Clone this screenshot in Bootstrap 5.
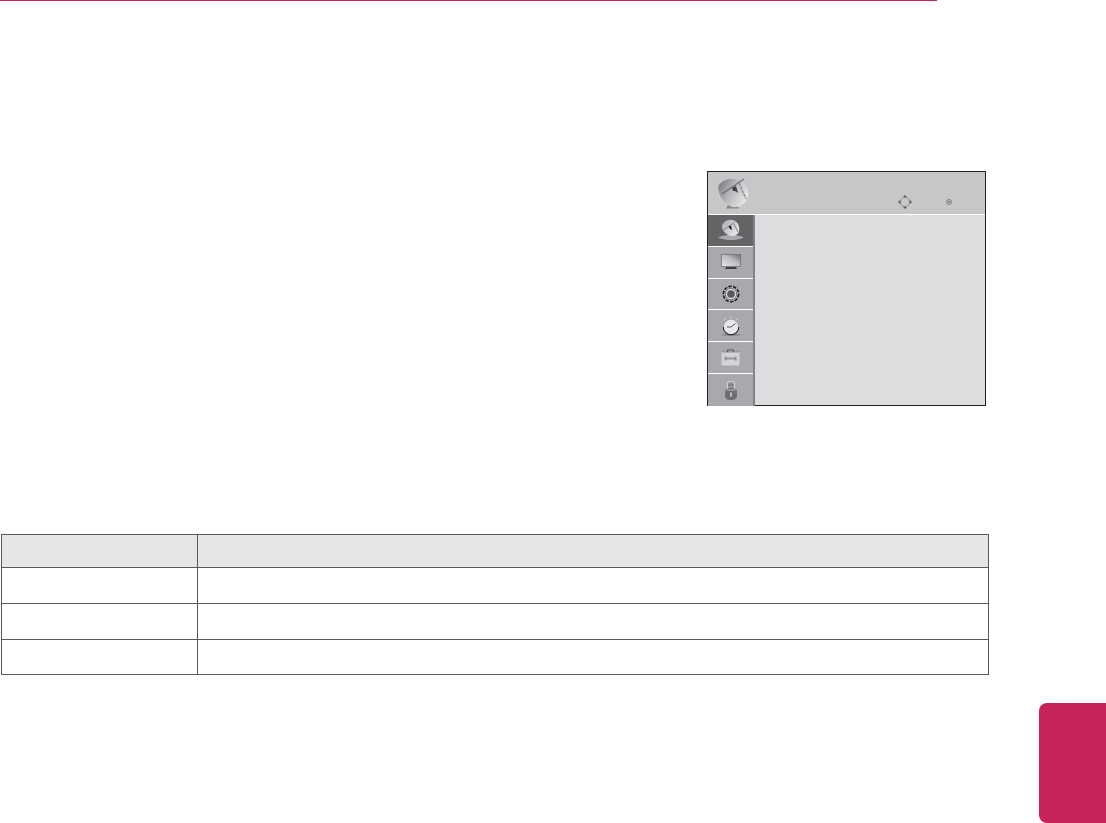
<!DOCTYPE html>
<html lang="en">
<head>
    <meta charset="UTF-8">
    <meta name="viewport" content="width=device-width, initial-scale=1.0">
    <title>Manual page</title>
    <link rel="stylesheet" href="https://cdn.jsdelivr.net/npm/bootstrap@5.3.0/dist/css/bootstrap.min.css">
    <script src="https://cdn.jsdelivr.net/npm/bootstrap@5.3.0/dist/js/bootstrap.bundle.min.js"></script>

    <style>
        body {
            margin: 0;
            background-color: #fff;
            font-family: "Liberation Sans", Arial, sans-serif;
            overflow: hidden;
        }

        .top-rule {
            width: 937px;
            height: 1px;
            background-color: #c9235d;
        }

        /* OSD menu picture */
        .osd-panel {
            width: 279px;
            height: 235px;
            margin-top: 170px;
            margin-left: 707px;
            border: 1px solid #231f20;
            background-color: #dcddde;
        }

        .osd-panel svg {
            filter: blur(0.4px);
        }

        .osd-head {
            height: 42px;
            padding-left: 9px;
            background-color: #c6c7c8;
            border-bottom: 1px solid #fff;
            box-sizing: content-box;
        }

        .osd-keys {
            padding-top: 17px;
            margin-left: 148px;
            gap: 34px;
        }

        .osd-body {
            height: 191px;
        }

        .osd-side {
            width: 47px;
            background-color: #a7a9ac;
            border-right: 2px solid #808285;
        }

        .osd-item {
            height: 32px;
            border-bottom: 1px solid #fff;
        }

        .osd-item:last-child {
            flex-grow: 1;
            border-bottom: 0;
        }

        .osd-item.is-on {
            height: 32px;
            background-color: #636466;
        }

        /* empty table */
        .spec-table {
            width: 988px;
            margin-top: 128px;
            margin-left: 1px;
            margin-bottom: 0;
            table-layout: fixed;
            border-color: #58595b;
        }

        .spec-table th,
        .spec-table td {
            padding: 0;
            border-width: 1px;
            border-color: #58595b;
            background-color: transparent;
            box-shadow: none;
        }

        .spec-table tr {
            height: 36px;
        }

        .spec-table tr.last-row {
            height: 35px;
        }

        .spec-table .head-row {
            height: 33px;
        }

        .spec-table .head-row th {
            background-color: #e6e6e6;
        }

        .col-first {
            width: 196px;
        }

        .side-tab {
            width: 67px;
            height: 120px;
            margin-top: 28px;
            margin-left: auto;
            background-color: #c7235b;
            border-radius: 8px 0 0 8px;
        }
    </style>
</head>
<body>
    <div class="top-rule"></div>

    <!-- Menu picture -->
    <div class="osd-panel">
        <div class="osd-head d-flex align-items-center">
            <svg width="33" height="33" viewBox="0 0 33 33">
                <defs>
                    <linearGradient id="dishGrad" x1="0" y1="0.1" x2="1" y2="0.6">
                        <stop offset="0" stop-color="#77787b"/>
                        <stop offset="0.5" stop-color="#b9bbbd"/>
                        <stop offset="1" stop-color="#e6e7e8"/>
                    </linearGradient>
                    <linearGradient id="dishGrad2" x1="0" y1="0" x2="1" y2="0.7">
                        <stop offset="0" stop-color="#a7a9ac"/>
                        <stop offset="1" stop-color="#e6e7e8"/>
                    </linearGradient>
                </defs>
                <path d="M11 28l-2 3.500h13l-2-3.500z" fill="#858789"/>
                <path d="M1.500 9C5 2.500 14 .5 21 2.500 29 5.500 33 14 30.500 21 28 28 21 31 15 30 6.500 27 .5 17 1.500 9z" fill="url(#dishGrad)"/>
                <path d="M5 17L27 2" stroke="#6d6e71" stroke-width="1.300"/>
                <path d="M15 11l4-2 2 7-3-2-2 0z" fill="#414042"/>
                <path d="M22 6l7 16" stroke="#939598" stroke-width="1.800" stroke-dasharray="3 1"/>
            </svg>
            <div class="osd-keys d-flex align-items-center">
                <svg width="14" height="14" viewBox="0 0 14 14">
                    <path d="M4.500 2.800h5l1.700 1.700v5l-1.700 1.700h-5L2.800 9.500v-5z" fill="none" stroke="#a7a9ac" stroke-width="1.300"/>
                    <path d="M7 0l2.200 2.300H4.800zM7 14l2.200-2.300H4.800zM0 7l2.300-2.200v4.400zM14 7l-2.300-2.200v4.400z" fill="#58595b"/>
                </svg>
                <svg width="6" height="6" viewBox="0 0 6 6">
                    <circle cx="3" cy="3" r="2.500" fill="none" stroke="#6d6e71" stroke-width="0.800"/>
                    <circle cx="3" cy="3" r="1" fill="#6d6e71"/>
                </svg>
            </div>
        </div>
        <div class="osd-body d-flex">
            <div class="osd-side d-flex flex-column">
                <!-- Channel -->
                <div class="osd-item is-on d-flex align-items-center justify-content-center">
                    <svg width="26" height="22" viewBox="0 0 26 22">
                        <path d="M0 18.500C4 16.500 9 16 13 16s9 .5 13 2.500c-4 2-9 2.500-13 2.500s-9-.5-13-2.500z" fill="#a7a9ac"/>
                        <path d="M4 6C6 1.500 11 0 15 1c5 1.500 7 7 6 11-1 4-5 5.500-8 5C7 15.500 3 10 4 6z" fill="url(#dishGrad2)"/>
                        <path d="M5.500 11L17 3" stroke="#6d6e71" stroke-width="0.800"/>
                        <path d="M10.500 7.500l2.500-1 1 4.500-2-1z" fill="#231f20"/>
                        <path d="M16 5l4 8" stroke="#808285" stroke-width="1"/>
                    </svg>
                </div>
                <!-- Picture -->
                <div class="osd-item d-flex align-items-center justify-content-center">
                    <svg width="20" height="16" viewBox="0 0 20 16">
                        <defs>
                            <linearGradient id="tvGrad" x1="0" y1="1" x2="1" y2="0">
                                <stop offset="0" stop-color="#e6e7e8"/>
                                <stop offset="0.55" stop-color="#bcbec0"/>
                                <stop offset="1" stop-color="#6d6e71"/>
                            </linearGradient>
                        </defs>
                        <rect x="0.500" y="0.500" width="19" height="12" fill="url(#tvGrad)" stroke="#6d6e71" stroke-width="0.700"/>
                        <path d="M5 13h10l1 2H4z" fill="#414042"/>
                    </svg>
                </div>
                <!-- Audio -->
                <div class="osd-item d-flex align-items-center justify-content-center">
                    <svg width="18" height="18" viewBox="0 0 18 18">
                        <circle cx="9" cy="9" r="7.600" fill="#c9cacc" stroke="#231f20" stroke-width="1.700" stroke-dasharray="3.500 1.200"/>
                        <circle cx="9" cy="9" r="5.800" fill="#d1d3d4" stroke="#58595b" stroke-width="0.800"/>
                        <circle cx="9" cy="9" r="3.800" fill="#58595b"/>
                    </svg>
                </div>
                <!-- Time -->
                <div class="osd-item d-flex align-items-center justify-content-center">
                    <svg width="20" height="20" viewBox="0 0 20 20">
                        <ellipse cx="10" cy="18.800" rx="9.500" ry="1.100" fill="#808285"/>
                        <path d="M2.400 11a7.600 7.600 0 0 0 15.200 0" fill="none" stroke="#231f20" stroke-width="1.400"/>
                        <circle cx="10" cy="11" r="7.200" fill="#e6e7e8"/>
                        <path d="M10 11l4.500-3.500M10 11H6" stroke="#58595b" stroke-width="1"/>
                        <path d="M10 .5v1.500M16.500 2.500l-1 1.300M3.500 2.500l1 1.300" stroke="#e6e7e8" stroke-width="1"/>
                    </svg>
                </div>
                <!-- Option -->
                <div class="osd-item d-flex align-items-center justify-content-center">
                    <svg width="19" height="17" viewBox="0 0 19 17">
                        <rect x="0.500" y="3" width="18" height="13.500" fill="#d1d3d4"/>
                        <path d="M6.500 3V1h6v2" fill="none" stroke="#58595b" stroke-width="1.100"/>
                        <path d="M1 3h17" stroke="#808285" stroke-width="0.800"/>
                        <path d="M5 9.500h9" stroke="#939598" stroke-width="2"/>
                        <path d="M4.500 7.500v4M14.500 7.500v4" stroke="#939598" stroke-width="2"/>
                    </svg>
                </div>
                <!-- Lock -->
                <div class="osd-item d-flex align-items-center justify-content-center">
                    <svg width="14" height="21" viewBox="0 0 14 21">
                        <path d="M3.500 9V3.500A2 2 0 0 1 5.500 1.500h3a2 2 0 0 1 2 2V9" fill="#939598" stroke="#d1d3d4" stroke-width="1.200"/>
                        <path d="M4 5h6" stroke="#6d6e71" stroke-width="1"/>
                        <path d="M1 12c0-2.500 2.500-4 6-4s6 1.500 6 4v4c0 2.500-2.500 4-6 4s-6-1.500-6-4z" fill="#6d6e71"/>
                        <path d="M2.500 10h9" stroke="#bcbec0" stroke-width="1"/>
                        <path d="M7 12.500v4" stroke="#e6e7e8" stroke-width="1.300"/>
                    </svg>
                </div>
            </div>
            <div class="flex-grow-1"></div>
        </div>
    </div>

    <!-- Table -->
    <table class="table table-bordered spec-table">
        <colgroup>
            <col class="col-first">
            <col>
        </colgroup>
        <thead>
            <tr class="head-row"><th></th><th></th></tr>
        </thead>
        <tbody>
            <tr><td></td><td></td></tr>
            <tr><td></td><td></td></tr>
            <tr class="last-row"><td></td><td></td></tr>
        </tbody>
    </table>

    <div class="side-tab"></div>
</body>
</html>
